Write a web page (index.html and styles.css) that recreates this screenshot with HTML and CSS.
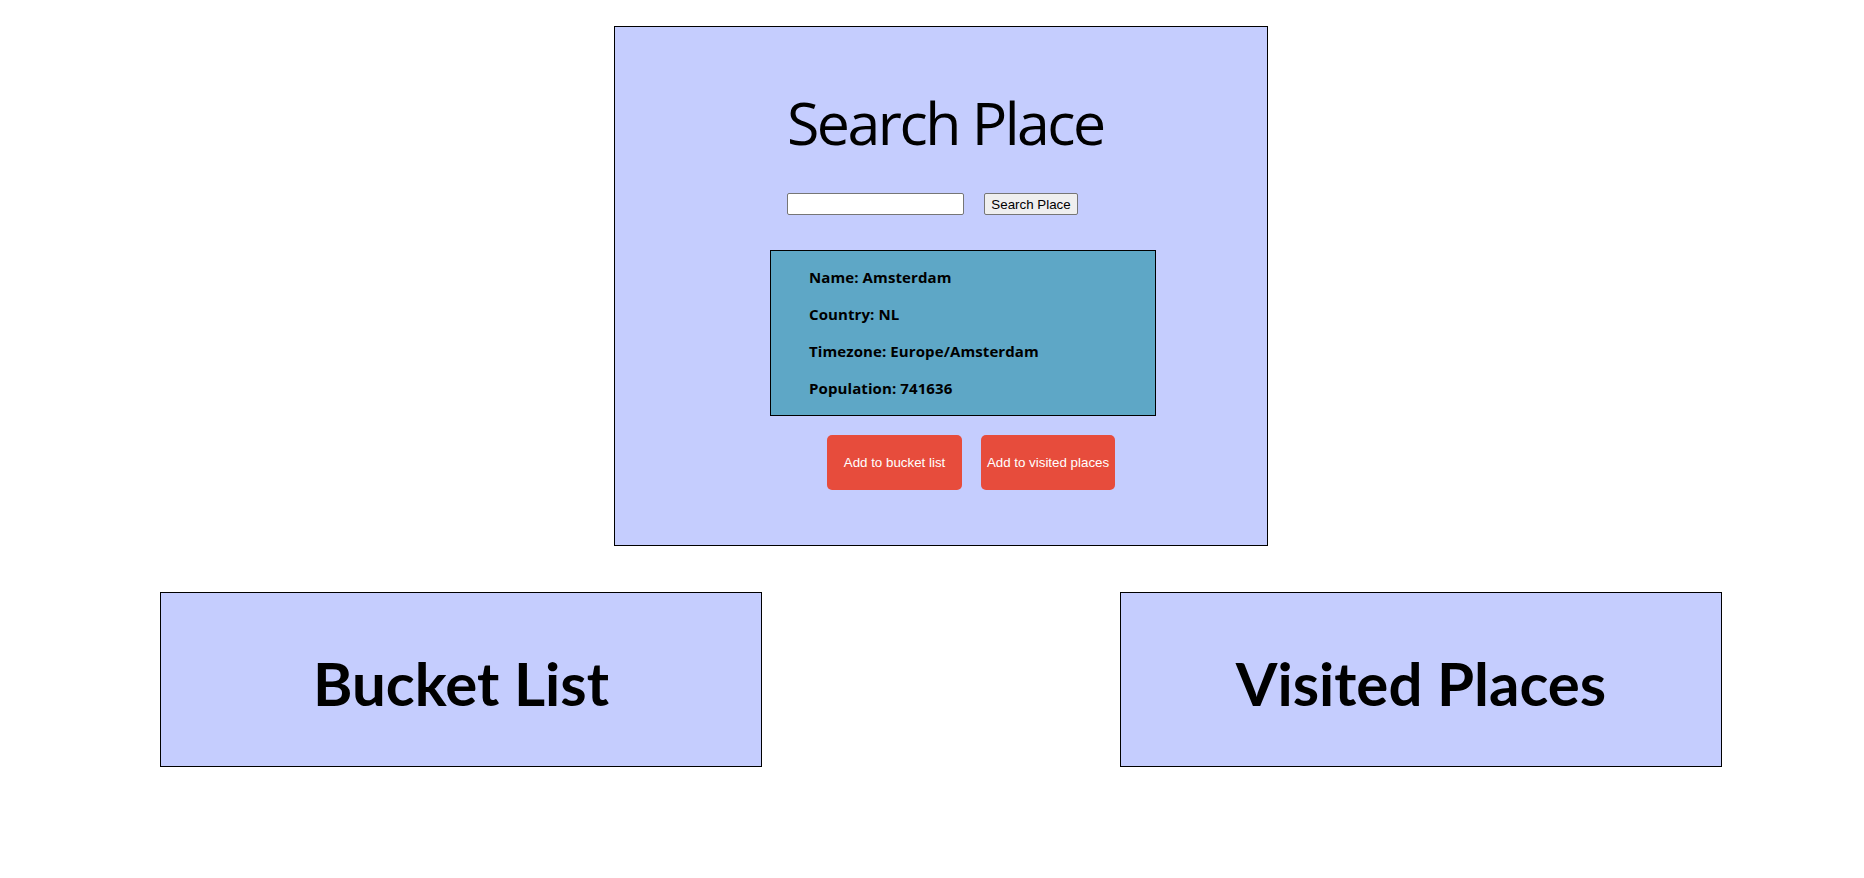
FILE: index.html
```html
<!DOCTYPE html>
<html lang="en">
<head>
<meta charset="utf-8">
<title>Search Place</title>
<link rel="stylesheet" href="styles.css">
</head>
<body>
<main class="page">
  <section class="search-card">
    <h1 class="title">Search Place</h1>
    <div class="search-row">
      <input class="search-input" type="text">
      <button class="search-btn" type="button">Search Place</button>
    </div>
    <div class="info">
      <p class="info-line">Name: Amsterdam</p>
      <p class="info-line">Country: NL</p>
      <p class="info-line">Timezone: Europe/Amsterdam</p>
      <p class="info-line">Population: 741636</p>
    </div>
    <div class="actions">
      <button class="action action-bucket" type="button">Add to bucket list</button>
      <button class="action action-visited" type="button">Add to visited places</button>
    </div>
  </section>
  <section class="lists">
    <div class="list-card"><h2 class="list-title">Bucket List</h2></div>
    <div class="list-card"><h2 class="list-title">Visited Places</h2></div>
  </section>
</main>
</body>
</html>
```
FILE: styles.css
```css
* { box-sizing: border-box; }
html, body { margin: 0; padding: 0; background: #fff; }
body { font-family: "Open Sans", "Noto Sans", sans-serif; color: #000; }

.page {
  display: flex;
  flex-direction: column;
  align-items: center;
  padding: 26px 0 0 18px;
}

.search-card {
  width: 654px;
  background: #c5cdfe;
  border: 1px solid #000;
  padding: 59px 0 55px 172px;
  display: flex;
  flex-direction: column;
  align-items: flex-start;
}

.title {
  margin: 0;
  font-weight: 400;
  font-size: 59px;
  line-height: 72px;
  letter-spacing: -2.5px;
}

.search-row {
  margin-top: 35px;
  display: flex;
  gap: 20px;
}

.search-input {
  width: 177px;
  height: 22px;
  margin: 0;
  border: 1px solid #767676;
  border-radius: 2px;
  background: #fff;
  padding: 1px 2px;
}

.search-btn {
  width: 94px;
  height: 22px;
  margin: 0;
  padding: 0;
  border: 1px solid #767676;
  border-radius: 2px;
  background: #efefef;
  font-family: "Liberation Sans", Arial, sans-serif;
  font-size: 13.33px;
  color: #000;
}

.info {
  margin: 35px 0 0 -17px;
  width: 386px;
  background: #5ea7c6;
  border: 1px solid #000;
  padding: 0 0 0 38px;
}

.info-line {
  margin: 16px 0;
  font-weight: 700;
  font-size: 15px;
  line-height: 21px;
  letter-spacing: 0.1px;
}

.actions {
  margin: 19px 0 0 40px;
  display: flex;
  gap: 19px;
}

.action {
  height: 55px;
  margin: 0;
  padding: 0;
  border: none;
  border-radius: 5px;
  background: #e74c3c;
  color: #fff;
  font-family: "Liberation Sans", Arial, sans-serif;
  font-size: 13.33px;
}

.action-bucket { width: 135px; }
.action-visited { width: 134px; }

.lists {
  margin-top: 46px;
  display: flex;
  gap: 358px;
}

.list-card {
  width: 602px;
  height: 175px;
  background: #c5cdfe;
  border: 1px solid #000;
  display: flex;
  align-items: center;
  justify-content: center;
}

.list-title {
  margin: 0;
  padding-top: 6px;
  font-family: Lato, "Open Sans", sans-serif;
  font-weight: 700;
  font-size: 60px;
  line-height: 72px;
}
```
